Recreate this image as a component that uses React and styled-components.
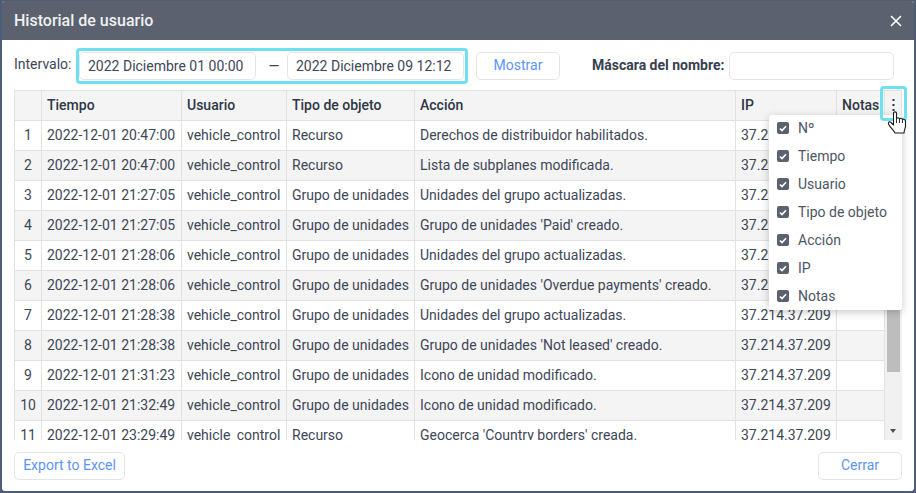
import React from 'react';
import styled, { createGlobalStyle } from 'styled-components';

const Global = createGlobalStyle`
  html, body { margin: 0; padding: 0; background: #4d5d78; }
  body { font-family: Roboto, "Liberation Sans", sans-serif; width: 916px; height: 493px; overflow: hidden; }
  * { box-sizing: border-box; }
`;

const Backdrop = styled.div`
  width: 916px;
  height: 493px;
  padding: 1px 2px 2px 2px;
  background: #4d5d78;
`;
const Dialog = styled.div`
  width: 912px;
  height: 490px;
  background: #fff;
  border-radius: 3px;
  overflow: hidden;
  display: flex;
  flex-direction: column;
  position: relative;
`;
const Header = styled.div`
  height: 39px;
  flex: none;
  background: #5b616e;
  display: flex;
  align-items: center;
  justify-content: space-between;
  padding: 0 12px;
  color: #fff;
`;
const Title = styled.div`
  font-size: 16px;
  font-weight: 500;
  color: #eef0f2;
`;
const CloseIcon = styled.svg`
  width: 12px;
  height: 12px;
  display: block;
`;
const Toolbar = styled.div`
  height: 50px;
  flex: none;
  display: flex;
  align-items: center;
  padding: 2px 12px 0;
`;
const Label = styled.span`
  font-size: 14px;
  color: #3e4656;
  width: 62px;
  flex: none;
  position: relative;
  top: -2px;
`;
const Highlight = styled.div`
  display: flex;
  align-items: center;
  height: 36px;
  width: 392px;
  padding: 0 1px 0 0;
  border: 3px solid #6ee0f0;
  border-radius: 4px;
`;
const Field = styled.div`
  height: 28px;
  width: ${p => p.$w}px;
  border: 1px solid #e3e5e8;
  border-radius: 5px;
  font-size: 14px;
  color: #3e4656;
  display: flex;
  align-items: center;
  padding: 0 8px;
  flex: none;
  background: #fff;
`;
const Dash = styled.div`
  width: 31px;
  padding-left: 5px;
  text-align: center;
  font-size: 14px;
  color: #3e4656;
`;
const Button = styled.button`
  height: 28px;
  width: ${p => p.$w}px;
  border: 1px solid #e3e5e8;
  border-radius: 5px;
  background: #fff;
  color: #5d94f8;
  font-family: inherit;
  font-size: 14px;
  padding: 0 0 2px;
  flex: none;
`;
const ShowButton = styled(Button)`
  margin-left: 8px;
`;
const MaskLabel = styled.span`
  font-size: 14px;
  font-weight: 700;
  color: #38404f;
  margin-left: 32px;
  margin-right: 5px;
  position: relative;
  top: -1px;
`;
const TableWrap = styled.div`
  margin: 0 12px;
  height: 350px;
  flex: none;
  overflow: hidden;
  position: relative;
  display: flex;
`;
const TableScroll = styled.div`
  flex: 1;
  min-width: 0;
`;
const Row = styled.div`
  display: grid;
  grid-template-columns: 28px 140px 105px 128px 321px 101px 48px;
  height: ${p => (p.$head ? 31 : 30)}px;
  background: ${p => (p.$head || p.$shade ? '#f4f4f4' : '#fff')};
  border-bottom: 1px solid #e2e2e2;
  border-top: ${p => (p.$head ? '1px solid #e2e2e2' : 'none')};
`;
const Cell = styled.div`
  font-size: 14px;
  font-weight: ${p => (p.$head ? 500 : 400)};
  color: ${p => (p.$head ? '#2f3644' : '#3e4656')};
  padding: 0 5px ${p => (p.$head ? 1 : 2)}px;
  display: flex;
  align-items: center;
  justify-content: ${p => (p.$center ? 'center' : 'flex-start')};
  border-right: 1px solid #e2e2e2;
  border-left: ${p => (p.$first ? '1px solid #e2e2e2' : 'none')};
  white-space: nowrap;
  overflow: hidden;
`;
const Scrollbar = styled.div`
  width: 17px;
  flex: none;
  margin-top: 31px;
  background: #f1f1f1;
  position: relative;
`;
const Thumb = styled.div`
  position: absolute;
  left: 2px;
  right: 2px;
  top: 17px;
  height: 234px;
  background: #bdbdbd;
`;
const ArrowDown = styled.div`
  position: absolute;
  left: 5px;
  bottom: 7px;
  width: 0;
  height: 0;
  border-left: 3.5px solid transparent;
  border-right: 3.5px solid transparent;
  border-top: 4px solid #505050;
`;
const HeadMenuCell = styled.div`
  position: absolute;
  right: 0;
  top: 0;
  width: 17px;
  height: 31px;
  background: #f4f4f4;
  border-top: 1px solid #e2e2e2;
  border-bottom: 1px solid #e2e2e2;
  border-right: 1px solid #e2e2e2;
`;
const Footer = styled.div`
  flex: 1;
  display: flex;
  align-items: center;
  justify-content: space-between;
  padding: 0 12px;
`;
const MenuButtonRing = styled.div`
  position: absolute;
  left: 878px;
  top: 85px;
  width: 27px;
  height: 35px;
  border: 3px solid #6ee0f0;
  border-radius: 4px;
  display: flex;
  align-items: center;
  justify-content: center;
  z-index: 3;
`;
const Dots = styled.svg`
  width: 3px;
  height: 12px;
  display: block;
  position: relative;
  top: 1px;
`;
const Menu = styled.div`
  position: absolute;
  left: 767px;
  top: 114px;
  width: 133px;
  height: 195px;
  background: #fff;
  border-radius: 3px;
  box-shadow: 0 2px 8px rgba(0, 0, 0, 0.22);
  z-index: 2;
`;
const MenuList = styled.div`
  margin-top: -1px;
`;
const MenuItem = styled.div`
  height: 28px;
  display: flex;
  align-items: center;
  gap: 9px;
  padding-left: 8px;
  font-size: 14px;
  color: #4e5563;
`;
const Box = styled.span`
  width: 12px;
  height: 12px;
  border-radius: 2px;
  background: #5b616e;
  display: flex;
  align-items: center;
  justify-content: center;
  flex: none;
`;
const Cursor = styled.svg`
  position: absolute;
  left: 885px;
  top: 107px;
  width: 20px;
  height: 26px;
  z-index: 4;
`;

const rows = [
  ['1', '2022-12-01 20:47:00', 'Recurso', 'Derechos de distribuidor habilitados.'],
  ['2', '2022-12-01 20:47:00', 'Recurso', 'Lista de subplanes modificada.'],
  ['3', '2022-12-01 21:27:05', 'Grupo de unidades', 'Unidades del grupo actualizadas.'],
  ['4', '2022-12-01 21:27:05', 'Grupo de unidades', "Grupo de unidades 'Paid' creado."],
  ['5', '2022-12-01 21:28:06', 'Grupo de unidades', 'Unidades del grupo actualizadas.'],
  ['6', '2022-12-01 21:28:06', 'Grupo de unidades', "Grupo de unidades 'Overdue payments' creado."],
  ['7', '2022-12-01 21:28:38', 'Grupo de unidades', 'Unidades del grupo actualizadas.'],
  ['8', '2022-12-01 21:28:38', 'Grupo de unidades', "Grupo de unidades 'Not leased' creado."],
  ['9', '2022-12-01 21:31:23', 'Grupo de unidades', 'Icono de unidad modificado.'],
  ['10', '2022-12-01 21:32:49', 'Grupo de unidades', 'Icono de unidad modificado.'],
  ['11', '2022-12-01 23:29:49', 'Recurso', "Geocerca 'Country borders' creada."],
];
const columns = ['Nº', 'Tiempo', 'Usuario', 'Tipo de objeto', 'Acción', 'IP', 'Notas'];

const Check = () => (
  <svg width="8" height="7" viewBox="0 0 8 7">
    <path d="M1 3.5 L3 5.5 L7 1.2" fill="none" stroke="#fff" strokeWidth="1.6" />
  </svg>
);

export default function App() {
  return (
    <Backdrop>
      <Global />
      <Dialog>
        <Header>
          <Title>Historial de usuario</Title>
          <CloseIcon viewBox="0 0 12 12">
            <path d="M1 1 L11 11 M11 1 L1 11" stroke="#fff" strokeWidth="1.6" fill="none" />
          </CloseIcon>
        </Header>
        <Toolbar>
          <Label>Intervalo:</Label>
          <Highlight>
            <Field $w={177}>2022 Diciembre 01 00:00</Field>
            <Dash>—</Dash>
            <Field $w={177}>2022 Diciembre 09 12:12</Field>
          </Highlight>
          <ShowButton $w={84}>Mostrar</ShowButton>
          <MaskLabel>Máscara del nombre:</MaskLabel>
          <Field $w={165} />
        </Toolbar>
        <TableWrap>
          <TableScroll>
            <Row $head>
              <Cell $first $head />
              {columns.slice(1).map(c => <Cell key={c} $head>{c}</Cell>)}
            </Row>
            {rows.map((r, i) => (
              <Row key={r[0]} $shade={i % 2 === 1}>
                <Cell $first $center>{r[0]}</Cell>
                <Cell>{r[1]}</Cell>
                <Cell>vehicle_control</Cell>
                <Cell>{r[2]}</Cell>
                <Cell>{r[3]}</Cell>
                <Cell>37.214.37.209</Cell>
                <Cell />
              </Row>
            ))}
          </TableScroll>
          <Scrollbar>
            <Thumb />
            <ArrowDown />
          </Scrollbar>
          <HeadMenuCell />
        </TableWrap>
        <Footer>
          <Button $w={111}>Export to Excel</Button>
          <Button $w={84}>Cerrar</Button>
        </Footer>
        <MenuButtonRing>
          <Dots viewBox="0 0 3 12">
            <rect x="0.5" y="0" width="2" height="2" fill="#2f3644" />
            <rect x="0.5" y="5" width="2" height="2" fill="#2f3644" />
            <rect x="0.5" y="10" width="2" height="2" fill="#2f3644" />
          </Dots>
        </MenuButtonRing>
        <Menu>
          <MenuList>
            {columns.map(c => (
              <MenuItem key={c}>
                <Box><Check /></Box>
                {c}
              </MenuItem>
            ))}
          </MenuList>
        </Menu>
        <Cursor viewBox="0 0 20 26">
          <path d="M6.5 5 C6.5 3.5 9.5 3.5 9.5 5 L9.5 10.5 C10 9.5 12 9.5 12.5 11 C13 10 15 10 15.5 11.5 C16 11 18.5 11.5 18.5 13 L18.5 18 C18.5 20.5 17 22 17 25 L8 25 C7 22.5 3 19.5 1.5 16 C1 14 2.5 13 4 14.5 L6.5 17 Z" fill="#fff" stroke="#1a1a1a" strokeWidth="1.1" strokeLinejoin="round" />
          <path d="M9.5 10.5 L9.5 15 M12.5 11 L12.5 15 M15.5 11.5 L15.5 15" stroke="#1a1a1a" strokeWidth="0.9" fill="none" />
        </Cursor>
      </Dialog>
    </Backdrop>
  );
}
